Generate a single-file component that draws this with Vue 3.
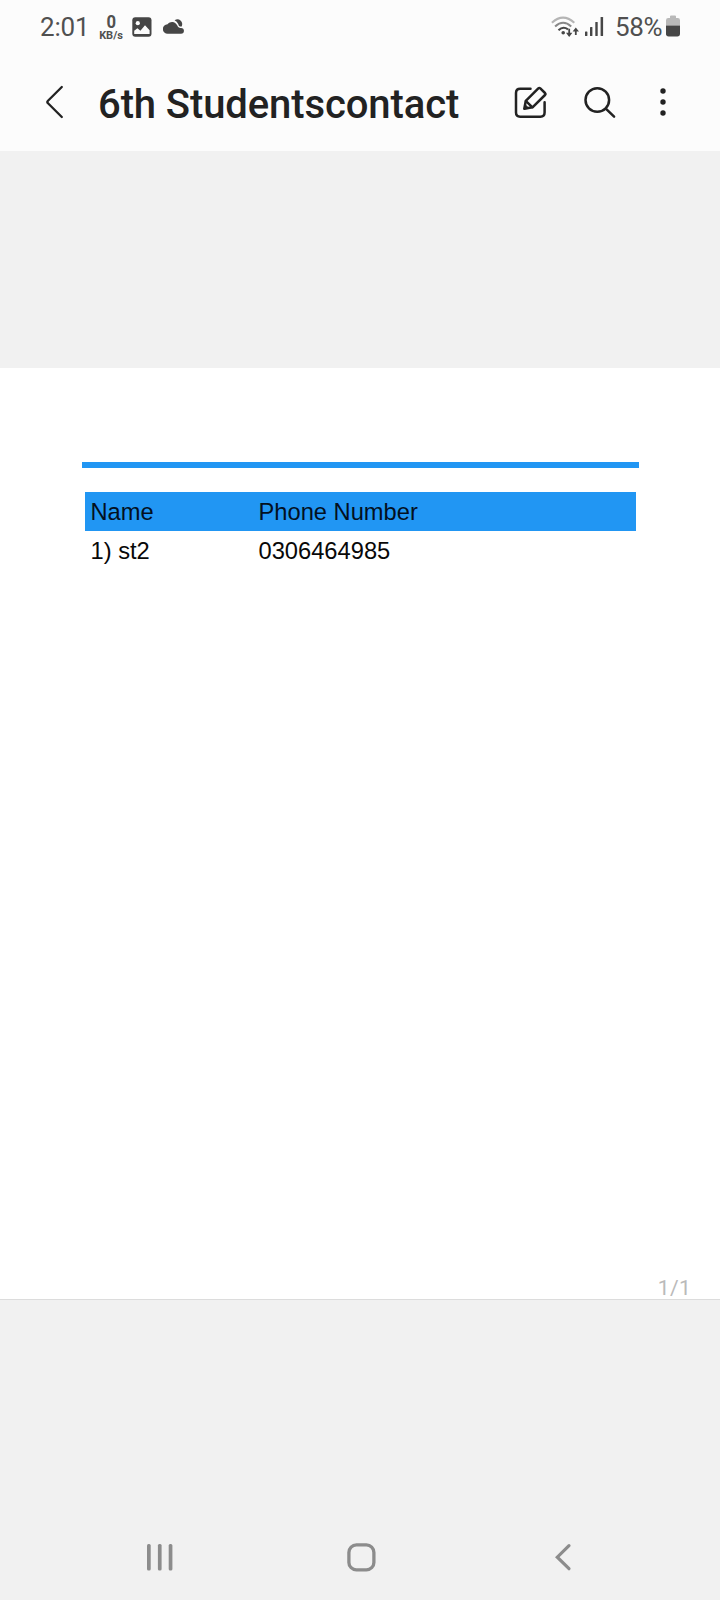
<script setup>
const columns = ['Name', 'Phone Number']
const students = [{ name: '1) st2', phone: '0306464985' }]
</script>

<template>
  <div class="screen">
    <header class="top">
      <div class="status">
        <span class="clock">2:01</span>
        <span class="speed"><b>0</b><small>KB/s</small></span>
        <svg class="photo" width="20" height="20" viewBox="0 0 20 20">
          <rect x=".3" y=".3" width="19.2" height="19.4" rx="3" fill="#464646" />
          <circle cx="5.8" cy="6.2" r="2.1" fill="#fcfcfc" />
          <path d="M2.2 17v-3.2l3.2-2.6 3 2.6 4.6-5.6 4.600 5V17z" fill="#fcfcfc" />
        </svg>
        <svg class="cloud" width="22" height="18" viewBox="0 0 22 18">
          <path d="M4.800 15.800A4.800 4.800 0 0 1 4.500 6.200 5.600 5.600 0 0 1 14 7.100q.8 2.600 3 2.800h1a2.950 2.950 0 0 1 0 5.900z" fill="#464646" />
          <path d="M11.600 2.200Q14.800 .2 17.500 2.400 20.200 4.800 18.700 8.500h-1.700Q15.600 8.100 15.200 6 14 3.200 11.600 2.200z" fill="#464646" />
        </svg>
        <svg class="wifi" width="29" height="24" viewBox="0 0 29 24" fill="none">
          <g stroke-width="2.1" stroke-linecap="butt">
            <path d="M.9 7.7Q12 -2.6 23.3 7.7" stroke="#b5b5b5" />
            <path d="M4.1 11.5Q12.1 4 20.2 11.5" stroke="#898989" />
            <path d="M7.5 15.3Q12 10.8 17 14.3" stroke="#464646" />
          </g>
          <circle cx="12.2" cy="17.8" r="1.8" fill="#464646" />
          <path d="M18.2 13.8v6.4M24.8 20v-6" stroke="#464646" stroke-width="1.8" />
          <path d="M15 17.800h6.400l-3.200 4.200zM21.600 16.400h6.400l-3.200-4z" fill="#464646" />
        </svg>
        <svg class="signal" width="19" height="21" viewBox="0 0 19 21" fill="#464646">
          <rect x="0" y="15.5" width="2.4" height="4.5" rx=".6" />
          <rect x="5" y="11" width="2.4" height="9" rx=".6" />
          <rect x="10.3" y="6" width="2.4" height="14" rx=".6" />
          <rect x="15.6" y="1" width="2.5" height="19" rx=".6" />
        </svg>
        <span class="percent">58%</span>
        <svg class="battery" width="14" height="22" viewBox="0 0 14 22">
          <path d="M0 10.5V5.2Q0 3 2.2 3H4V1.5Q4 .6 5 .6h4q1 0 1 .9V3h1.800Q14 3 14 5.200v5.300z" fill="#b9b9b9" />
          <path d="M0 10.500h14v8.300q0 2.700-2.700 2.700H2.700Q0 21.500 0 18.800z" fill="#464646" />
        </svg>
      </div>
      <div class="toolbar">
        <svg class="back" width="20" height="36" viewBox="0 0 20 36">
          <path d="M16.800 3 3 16.700q-1.300 1.300 0 2.600L16.800 33" fill="none" stroke="#222" stroke-width="2.300" stroke-linecap="round" stroke-linejoin="round" />
        </svg>
        <h1>6th Studentscontact</h1>
        <svg class="edit" width="34" height="34" viewBox="0 0 34 34" fill="none" stroke="#222" stroke-width="2.500" stroke-linecap="round" stroke-linejoin="round">
          <path d="M16.500 2.700H6.200Q2 2.700 2 6.900v19.700Q2 30.800 6.200 30.800h20.200q4.200 0 4.200-4.200V16.300" />
          <path d="M10.300 22.700 11.800 14.800 24.300 2.400Q25.300 1.500 26.300 2.400L31 7Q31.900 8 31 9L18.500 21.300z" />
          <path d="M12 15.100 18.200 21.100" />
          <path d="m10.300 22.700.8-4.100 3.300 3.300z" fill="#222" stroke-width="1" />
        </svg>
        <svg class="search" width="34" height="34" viewBox="0 0 34 34" fill="none" stroke="#222" stroke-width="2.500" stroke-linecap="round">
          <circle cx="14.300" cy="14" r="11.800" />
          <path d="m22.800 22.600 8.300 8.100" />
        </svg>
        <svg class="more" width="8" height="30" viewBox="0 0 8 30" fill="#222">
          <circle cx="4" cy="4" r="2.700" />
          <circle cx="4" cy="15" r="2.700" />
          <circle cx="4" cy="26" r="2.700" />
        </svg>
      </div>
    </header>

    <main class="page">
      <div class="rule"></div>
      <div class="table">
        <div class="row head">
          <span v-for="c in columns" :key="c">{{ c }}</span>
        </div>
        <div v-for="s in students" :key="s.phone" class="row">
          <span>{{ s.name }}</span><span>{{ s.phone }}</span>
        </div>
      </div>
      <div class="count">1/1</div>
    </main>

    <nav class="nav">
      <svg class="recents" width="26" height="28" viewBox="0 0 26 28" fill="#8c8c8c">
        <rect x="0" y="1" width="3.700" height="26.500" rx="1.500" />
        <rect x="10.900" y="1" width="3.700" height="26.500" rx="1.500" />
        <rect x="21.700" y="1" width="3.700" height="26.500" rx="1.500" />
      </svg>
      <svg class="home" width="29" height="29" viewBox="0 0 29 29">
        <rect x="1.900" y="1.900" width="25" height="25" rx="7.500" fill="none" stroke="#8c8c8c" stroke-width="3.300" />
      </svg>
      <svg class="prev" width="17" height="28" viewBox="0 0 17 28">
        <path d="M14 2.700 2.300 14.200 14 25.700" fill="none" stroke="#8c8c8c" stroke-width="3.200" stroke-linecap="round" />
      </svg>
    </nav>
  </div>
</template>

<style>
body {
  margin: 0;
  background: #f1f1f1;
}
</style>

<style scoped>
.screen {
  width: 720px;
  height: 1600px;
  display: flex;
  flex-direction: column;
  overflow: hidden;
  background: #f1f1f1;
  font-family: Roboto, sans-serif;
}
svg {
  display: block;
  flex: none;
}
.top {
  height: 151px;
  flex: none;
  background: #fcfcfc;
}
.status {
  display: flex;
  align-items: flex-start;
  height: 54px;
  color: #505050;
}
.clock {
  width: 58px;
  margin-left: 40px;
  padding-top: 12px;
  font-size: 26px;
  letter-spacing: -0.2px;
  line-height: 30px;
}
.speed {
  display: flex;
  flex-direction: column;
  align-items: center;
  width: 26px;
  padding-top: 12px;
}
.speed b {
  font-size: 18.5px;
  line-height: 20px;
  font-weight: 700;
  transform: scaleX(0.9);
}
.speed small {
  margin-top: -1px;
  font-size: 11px;
  line-height: 10px;
  font-weight: 700;
}
.photo {
  margin: 17px 0 0 8px;
}
.cloud {
  margin: 18px 0 0 11px;
}
.wifi {
  margin: 15px 0 0 366px;
}
.signal {
  margin: 16px 0 0 5px;
}
.percent {
  width: 51px;
  margin-left: 11px;
  padding-top: 12px;
  font-size: 26px;
  letter-spacing: -0.3px;
  line-height: 30px;
}
.battery {
  margin-top: 15px;
}
.toolbar {
  display: flex;
  align-items: flex-start;
}
.back {
  margin: 30px 0 0 45px;
}
h1 {
  width: 380px;
  margin: 27px 0 0 33px;
  color: #222;
  font-size: 40px;
  letter-spacing: -0.1px;
  line-height: 48px;
  font-weight: 500;
  white-space: nowrap;
}
.edit {
  margin: 32px 0 0 36px;
}
.search {
  margin: 32px 0 0 35px;
}
.more {
  margin: 33px 0 0 42px;
}
.page {
  display: flex;
  flex-direction: column;
  box-sizing: border-box;
  flex: none;
  height: 932px;
  margin-top: 217px;
  padding-top: 94px;
  border-bottom: 1px solid #dcdcdc;
  background: #fff;
}
.rule {
  height: 6px;
  margin: 0 81px 0 82px;
  background: #2196f3;
}
.table {
  margin: 23.500px 84px 0 85px;
  font-family: "Liberation Sans", Arial, sans-serif;
  font-size: 23.7px;
  line-height: 40px;
  color: #080808;
}
.row {
  display: grid;
  grid-template-columns: 168px 1fr;
  height: 39px;
  padding-left: 5.500px;
}
.head {
  background: #2196f3;
  color: #03101f;
}
.count {
  margin: auto 29px 0 auto;
  color: #bababa;
  font-size: 21px;
  letter-spacing: 0.3px;
  line-height: 22px;
}
.nav {
  display: flex;
  align-items: center;
  height: 86px;
  margin-top: auto;
}
.recents {
  margin-left: 147px;
}
.home {
  margin-left: 174px;
}
.prev {
  margin-left: 179px;
}
</style>
